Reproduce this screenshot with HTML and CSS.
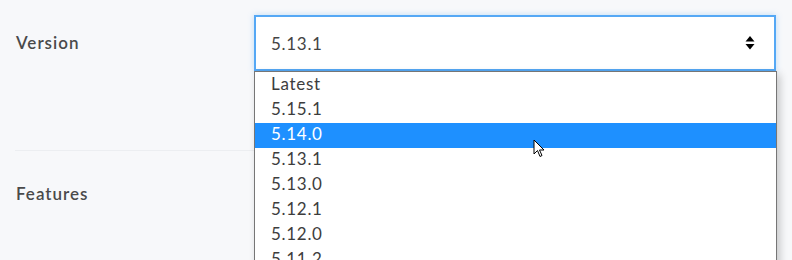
FILE: index.html
```html
<!DOCTYPE html>
<html lang="en">
<head>
    <meta charset="UTF-8">
    <title>Version</title>
    <link rel="stylesheet" href="styles.css">
</head>
<body>

    <div class="form">
        <!-- Version row -->
        <div class="row row-version">
            <div class="label">Version</div>
            <div class="control">
                <div class="select">
                    <span class="value">5.13.1</span>
                    <svg class="arrows" width="10" height="14" viewBox="0 0 10 14">
                        <path d="M5 0 L9.5 5.5 L0.5 5.5 Z" fill="#000"/>
                        <path d="M0.5 8 L9.5 8 L5 13.5 Z" fill="#000"/>
                    </svg>
                </div>
                <ul class="options">
                    <li>Latest</li>
                    <li>5.15.1</li>
                    <li class="selected">5.14.0</li>
                    <li>5.13.1</li>
                    <li>5.13.0</li>
                    <li>5.12.1</li>
                    <li>5.12.0</li>
                    <li>5.11.2</li>
                </ul>
                <svg class="cursor" width="14" height="20" viewBox="0 0 14 20">
                    <path d="M1 1 L1 15 L4.5 11.5 L7 17.5 L9 16.5 L6.5 11 L11 11 Z" fill="#fff" stroke="#000" stroke-width="1" stroke-linejoin="miter"/>
                </svg>
            </div>
        </div>

        <!-- Features row -->
        <div class="row row-features">
            <div class="label">Features</div>
            <div class="control"></div>
        </div>
    </div>

</body>
</html>
```

FILE: styles.css
```css
html, body {
    height: 100%;
}
body {
    font-family: Lato, "Noto Sans", sans-serif;
    background: #f7f8fa;
    margin: 0;
    padding: 0;
    color: #444;
    overflow: hidden;
}
.form {
    padding: 0 16px 0 15px;
}
.row {
    display: flex;
    align-items: center;
}
.row-version {
    padding: 15px 0 79px 0;
    border-bottom: 1px solid #eceef1;
    height: 56px;
}
.row-version .label {
    padding-bottom: 2px;
}
.row-features {
    height: 85px;
}
.label {
    width: 238px;
    padding-left: 1px;
    font-size: 17px;
    font-weight: 600;
    letter-spacing: 1px;
    color: #4a4a4a;
}
.control {
    flex: 1;
    position: relative;
    align-self: flex-start;
}
.select {
    height: 52px;
    border: 2px solid #55a8f5;
    background: white;
    box-shadow: 0 0 6px rgba(85, 168, 245, 0.35);
    display: flex;
    align-items: center;
    justify-content: space-between;
    padding: 0 19px 0 15px;
    font-size: 17px;
    letter-spacing: 0.7px;
    color: #444;
}
.value {
    padding-top: 1px;
}
.arrows {
    display: block;
}
.options {
    position: absolute;
    top: 56px;
    left: 0;
    right: -1px;
    margin: 0;
    padding: 1px 0 0 0;
    list-style: none;
    background: white;
    border: 1px solid #767676;
    box-shadow: 3px 3px 8px rgba(0, 0, 0, 0.2);
    height: 200px;
    overflow: hidden;
}
.options li {
    height: 22px;
    line-height: 22px;
    padding: 0 0 3px 16px;
    font-size: 17px;
    letter-spacing: 0.7px;
    color: #3d3d3d;
}
.options li.selected {
    background: #1e90ff;
    color: white;
}
.cursor {
    position: absolute;
    left: 279px;
    top: 124px;
}
```
